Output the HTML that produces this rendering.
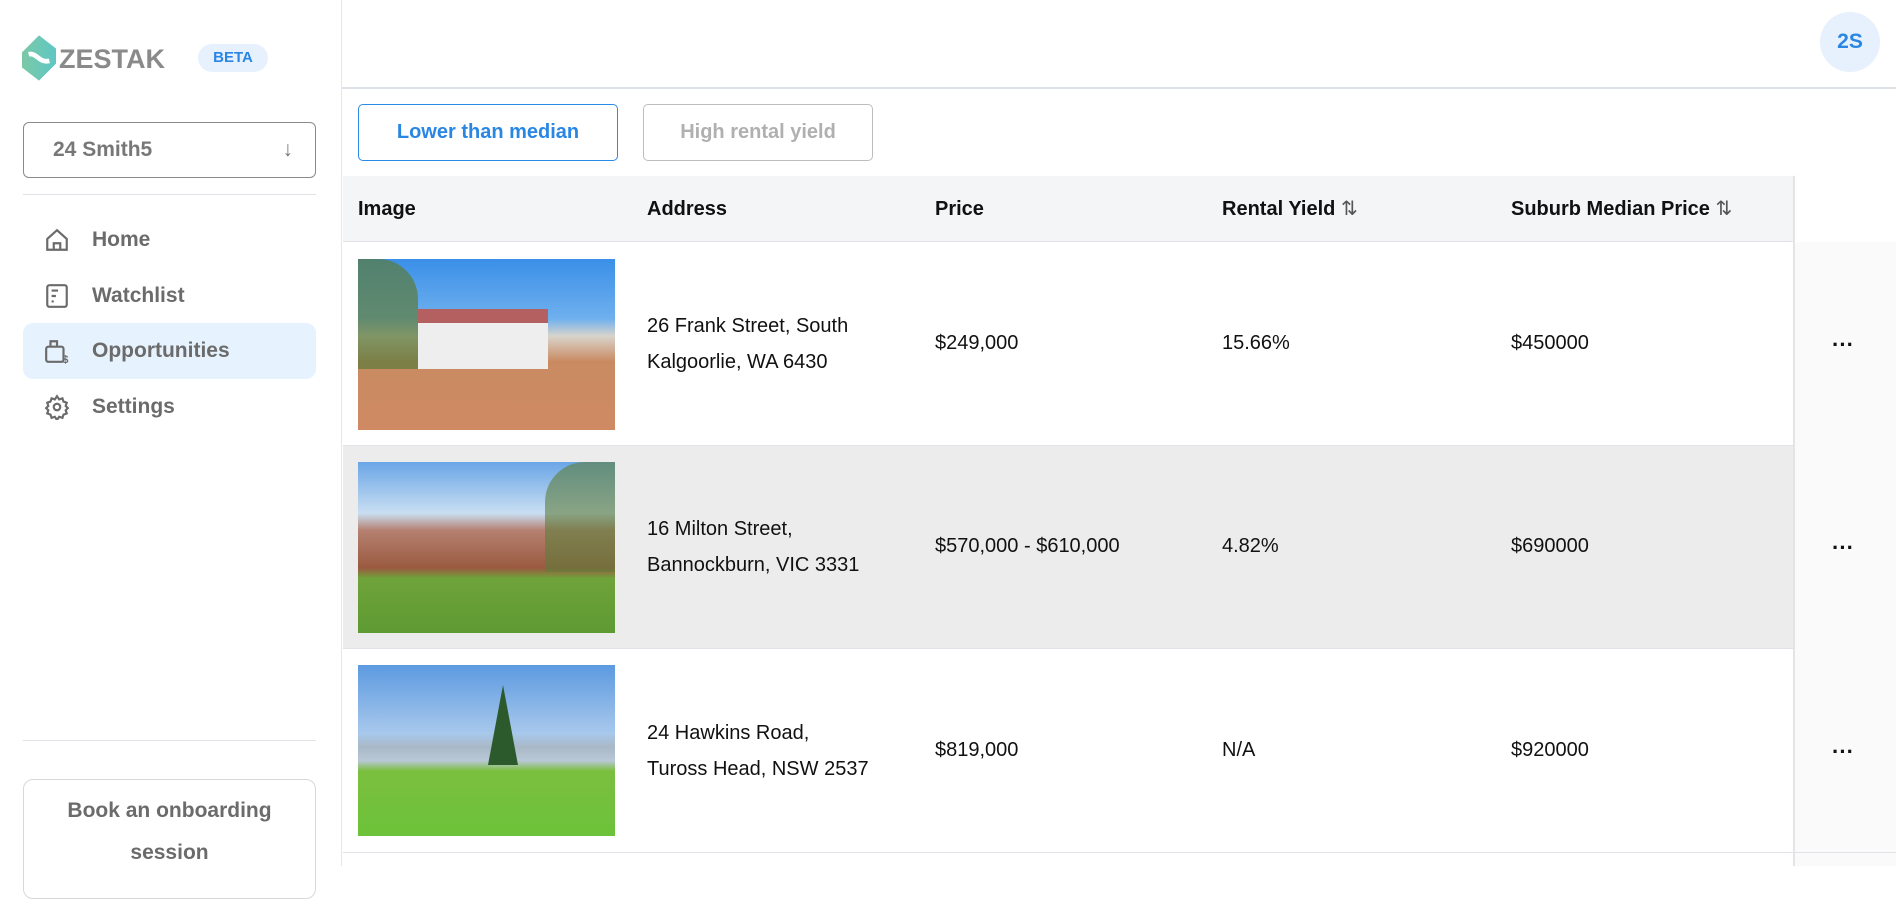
<!DOCTYPE html>
<html><head><meta charset="utf-8"><style>
*{box-sizing:border-box;margin:0;padding:0}
body{width:1896px;height:866px;overflow:hidden;background:#fff;font-family:"Liberation Sans",sans-serif;position:relative;color:#111}
.abs{position:absolute}
.side{left:0;top:0;width:342px;height:866px;border-right:1px solid #e5e7eb}
.nav{left:23px;width:293px;height:56px;border-radius:10px;font-size:21px;font-weight:bold;color:#6b6b6b;display:flex;align-items:center;padding-left:69px}
.nav svg{position:absolute;left:21px;top:15px}
.th{font-size:20px;font-weight:bold;top:176px;height:66px;line-height:66px}
.cell{font-size:20px;line-height:36px;color:#111}
.img{left:358px;width:257px;height:171px;overflow:hidden}
.dots{font-size:22px;font-weight:bold;left:1832px}
</style></head><body>
<div class="abs side"></div>
<!-- logo -->
<svg class="abs" style="left:22px;top:34px" width="34" height="48" viewBox="0 0 36 48"><defs><linearGradient id="g" x1="0" x2="1"><stop offset="0" stop-color="#7cc8a6"/><stop offset="1" stop-color="#5ec7c5"/></linearGradient></defs><polygon points="18,0 36,14 36,30 18,48 0,34 0,18" fill="url(#g)"/><path d="M7 20 C16 18 18 30 29 27" stroke="#fff" stroke-width="5" fill="none"/></svg>
<div class="abs" style="left:59px;top:44px;font-size:27px;font-weight:bold;color:#8a8a8a">ZESTAK</div>
<div class="abs" style="left:198px;top:44px;width:70px;height:28px;border-radius:14px;background:#e6f1fd;color:#2a86e3;font-size:15px;font-weight:bold;text-align:center;line-height:28px">BETA</div>
<div class="abs" style="left:23px;top:122px;width:293px;height:56px;border:1px solid #8a8a8a;border-radius:6px;font-size:21px;font-weight:bold;color:#777;line-height:54px;padding-left:29px">24 Smith5<span style="position:absolute;right:22px;font-weight:normal">↓</span></div>
<div class="abs" style="left:23px;top:194px;width:293px;height:1px;background:#e1e3e8"></div>
<div class="abs nav" style="top:212px"><svg width="26" height="26" viewBox="0 0 24 24" fill="none" stroke="#6b6b6b" stroke-width="2"><path d="M3 11 L12 3 L21 11 V21 H3 Z"/><path d="M9 21 V15 H15 V21"/></svg>Home</div>
<div class="abs nav" style="top:268px"><svg width="26" height="26" viewBox="0 0 24 24" fill="none" stroke="#6b6b6b" stroke-width="2"><rect x="3" y="2" width="18" height="20" rx="2"/><path d="M7 7h6M7 12h4M7 17h2"/></svg>Watchlist</div>
<div class="abs nav" style="top:323px;background:#e6f2fd"><svg width="26" height="26" viewBox="0 0 24 24" fill="none" stroke="#6b6b6b" stroke-width="2"><rect x="2" y="8" width="16" height="14" rx="2"/><path d="M6 8V3h6v5"/><text x="17" y="23" font-size="10" fill="#6b6b6b" stroke="none" font-weight="bold">$</text></svg>Opportunities</div>
<div class="abs nav" style="top:379px"><svg width="26" height="26" viewBox="0 0 24 24" fill="none" stroke="#6b6b6b" stroke-width="2"><circle cx="12" cy="12" r="3"/><path d="M12 2l2 3 3-1 1 3 3 1-1 3 2 2-2 2 1 3-3 1-1 3-3-1-2 3-2-3-3 1-1-3-3-1 1-3-2-2 2-2-1-3 3-1 1-3 3 1z"/></svg>Settings</div>
<div class="abs" style="left:23px;top:740px;width:293px;height:1px;background:#e1e3e8"></div>
<div class="abs" style="left:23px;top:779px;width:293px;height:120px;border:1px solid #d8d8d8;border-radius:10px;font-size:21px;font-weight:bold;color:#6b6b6b;text-align:center;line-height:42px;padding-top:10px">Book an onboarding<br>session</div>
<!-- header -->
<div class="abs" style="left:342px;top:87px;width:1554px;height:2px;background:#dde2e8"></div>
<div class="abs" style="left:1820px;top:12px;width:60px;height:60px;border-radius:30px;background:#e6f1fd;color:#2a86e3;font-size:21px;font-weight:bold;text-align:center;line-height:60px">2S</div>
<div class="abs" style="left:358px;top:104px;width:260px;height:57px;border:1px solid #2a8ae6;border-radius:5px;color:#2a86e3;font-size:20px;font-weight:bold;text-align:center;line-height:55px">Lower than median</div>
<div class="abs" style="left:643px;top:104px;width:230px;height:57px;border:1px solid #bdbdbd;border-radius:5px;color:#b0b0b0;font-size:20px;font-weight:bold;text-align:center;line-height:55px">High rental yield</div>
<!-- table -->
<div class="abs" style="left:343px;top:176px;width:1553px;height:66px;background:#f4f5f7;border-bottom:1px solid #e1e3e8"></div>
<div class="abs" style="left:1793px;top:176px;width:2px;height:690px;background:#e4e4e4;box-shadow:2px 0 4px #eee"></div>
<div class="abs" style="left:1795px;top:176px;width:101px;height:66px;background:#fff"></div>
<div class="abs th" style="left:358px">Image</div>
<div class="abs th" style="left:647px">Address</div>
<div class="abs th" style="left:935px">Price</div>
<div class="abs th" style="left:1222px">Rental Yield <span style="font-weight:normal;color:#555">⇅</span></div>
<div class="abs th" style="left:1511px">Suburb Median Price <span style="font-weight:normal;color:#555">⇅</span></div>
<div class="abs" style="left:343px;top:445px;width:1450px;height:204px;background:#ececec;border-top:1px solid #e1e3e8;border-bottom:1px solid #e1e3e8"></div>
<div class="abs" style="left:1795px;top:242px;width:101px;height:624px;background:#fafafa"></div>
<div class="abs" style="left:343px;top:852px;width:1553px;height:1px;background:#e1e3e8"></div>
<!-- row 1 -->
<div class="abs img" style="top:259px;background:linear-gradient(#3a8fe8 0%,#6fb0ee 35%,#d8d4cc 45%,#c98a62 60%,#cf8a63 100%)"><div style="position:absolute;left:60px;top:50px;width:130px;height:60px;background:#eee;border-top:14px solid #b56060"></div><div style="position:absolute;left:0;top:0;width:60px;height:110px;background:#5b7a3a;opacity:.7;border-radius:0 40px 0 0"></div></div>
<div class="abs cell" style="left:647px;top:308px">26 Frank Street, South<br>Kalgoorlie, WA 6430</div>
<div class="abs cell" style="left:935px;top:325px">$249,000</div>
<div class="abs cell" style="left:1222px;top:325px">15.66%</div>
<div class="abs cell" style="left:1511px;top:325px">$450000</div>
<div class="abs dots" style="top:332px">···</div>
<!-- row 2 -->
<div class="abs img" style="top:462px;background:linear-gradient(#6aa6e6 0%,#c9def2 30%,#b58070 40%,#9a5a40 62%,#6fa33a 68%,#5e9a32 100%)"><div style="position:absolute;right:0;top:0;width:70px;height:110px;background:#5d7d3b;opacity:.6;border-radius:40px 0 0 0"></div></div>
<div class="abs cell" style="left:647px;top:511px">16 Milton Street,<br>Bannockburn, VIC 3331</div>
<div class="abs cell" style="left:935px;top:528px">$570,000 - $610,000</div>
<div class="abs cell" style="left:1222px;top:528px">4.82%</div>
<div class="abs cell" style="left:1511px;top:528px">$690000</div>
<div class="abs dots" style="top:535px">···</div>
<!-- row 3 -->
<div class="abs img" style="top:665px;background:linear-gradient(#5c9ae0 0%,#a8c8ec 40%,#a9b8c6 48%,#b9c8d6 56%,#7bbf3e 62%,#6cc23a 100%)"><div style="position:absolute;left:130px;top:20px;width:30px;height:80px;background:#2d5a2d;clip-path:polygon(50% 0,100% 100%,0 100%)"></div></div>
<div class="abs cell" style="left:647px;top:715px">24 Hawkins Road,<br>Tuross Head, NSW 2537</div>
<div class="abs cell" style="left:935px;top:732px">$819,000</div>
<div class="abs cell" style="left:1222px;top:732px">N/A</div>
<div class="abs cell" style="left:1511px;top:732px">$920000</div>
<div class="abs dots" style="top:739px">···</div>
</body></html>
